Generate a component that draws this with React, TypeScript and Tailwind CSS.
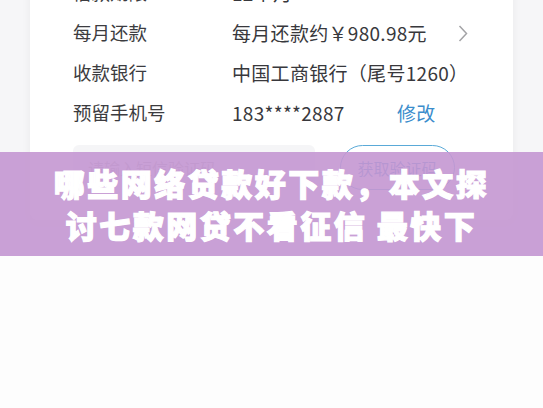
const FONT = { fontFamily: '"Noto Sans CJK SC", "Noto Sans", sans-serif' };

type Row = { label: string; value: React.ReactNode };

const rows: Row[] = [
  { label: '借款期限', value: '12个月' },
  {
    label: '每月还款',
    value: (
      <div className="flex w-full items-center justify-between">
        <span>每月还款约￥980.98元</span>
        <svg className="h-[17px] w-[10px]" viewBox="0 0 10 17" fill="none">
          <polyline points="1.5,1 8.5,8.5 1.5,16" stroke="#a3a3a6" strokeWidth="1.5" />
        </svg>
      </div>
    ),
  },
  { label: '收款银行', value: '中国工商银行（尾号1260）' },
  {
    label: '预留手机号',
    value: (
      <div className="flex items-center">
        <span className="w-[165px]">183****2887</span>
        <span className="text-[#3b8dcc]">修改</span>
      </div>
    ),
  },
];

export default function App() {
  return (
    <div className="relative h-[408px] w-[543px] overflow-hidden bg-[#fdfdfd]" style={FONT}>
      <div className="h-[256px] overflow-hidden bg-[#f6f6f8]">
        <div className="mx-[30px] mt-[-40px] rounded-lg bg-white pb-[30px] pl-[43px] pr-[45px] pt-[13px] shadow-[0_2px_10px_rgba(0,0,0,0.06)]">
          {rows.map((r, i) => (
            <div key={i} className="flex h-10 items-center text-[18.5px] text-[#3c3c40]">
              <span className="w-[159px] shrink-0">{r.label}</span>
              <div className="flex-1 text-[19px] tracking-[0.3px] text-[#38383c]">{r.value}</div>
            </div>
          ))}
          <div className="mt-3 flex items-center">
            <div className="flex h-[45px] w-[242px] items-center rounded-md bg-[#f5f5f7] pl-[15px] text-[16px] text-[#b0b0b4]">
              请输入短信验证码
            </div>
            <div className="ml-[25px] flex h-[45px] w-[115px] items-center justify-center rounded-full border border-[#5aaad8] text-[16px] text-[#3b8dcc]">
              获取验证码
            </div>
          </div>
        </div>
      </div>

      <div className="absolute left-0 top-[152px] flex h-[104px] w-full flex-col items-center justify-center bg-[#c497d2]/90 text-[31px] font-black leading-[42px] tracking-[2.5px] text-white [-webkit-text-stroke:1.2px_white]">
        <div>哪些网络贷款好下款，本文探</div>
        <div>讨七款网贷不看征信 最快下</div>
      </div>
    </div>
  );
}
